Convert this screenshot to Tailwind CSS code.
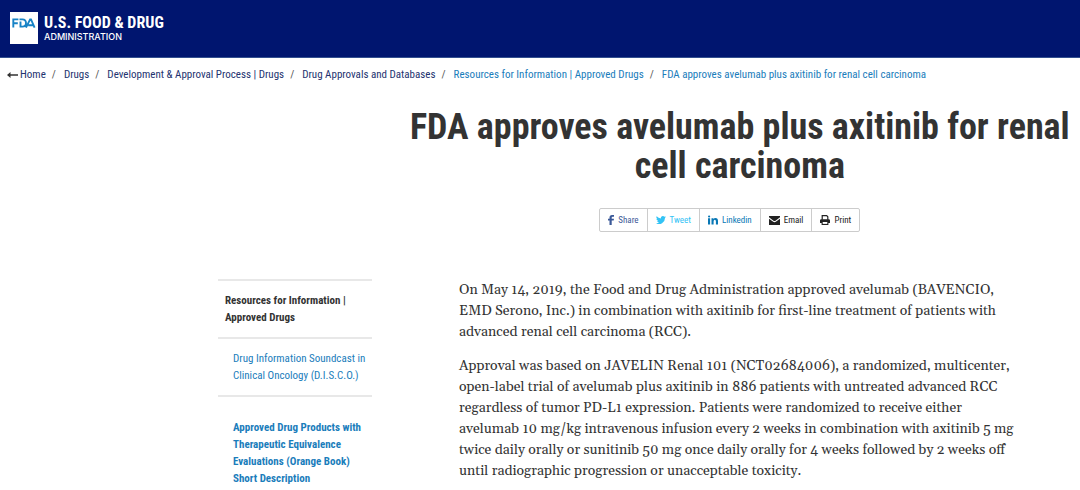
<!DOCTYPE html>
<html lang="en">
<head>
<meta charset="utf-8">
<meta name="viewport" content="width=device-width, initial-scale=1">
<title>FDA approves avelumab plus axitinib for renal cell carcinoma</title>
<script src="https://cdn.jsdelivr.net/npm/@tailwindcss/browser@4"></script>
</head>
<body class="bg-white text-[#333] font-['Roboto_Condensed','Liberation_Sans_Narrow',sans-serif]">
<header class="flex h-[58px] items-start gap-[6px] border-b border-[#33508f] bg-[#00156f] pt-3 pl-[10px] text-white">
  <svg class="h-8 w-7 shrink-0" viewBox="0 0 28 32" role="img" aria-label="FDA">
    <rect width="28" height="32" fill="#fff"/>
    <g fill="none" stroke="#1783c6" stroke-width="1.9">
      <path d="M3.3 15.6V7.4H8.4M3.3 11.3H7.8M10.5 9.6V14.6H12.4Q16 14.6 16 11T12.4 7.4H9.5M16 15.6 20.1 7.4H21L24.6 15.6M18.2 13.2H23.4"/>
    </g>
  </svg>
  <div>
    <p class="text-base leading-[21px] font-bold whitespace-nowrap">U.S. FOOD &amp; DRUG</p>
    <p class="font-['Inter',sans-serif] text-[9px] leading-[8px] font-medium whitespace-nowrap">ADMINISTRATION</p>
  </div>
</header>
<nav aria-label="Breadcrumb" class="pt-[8px] pl-[7px]">
  <ol class="flex flex-wrap gap-x-[6px] text-[11px] leading-[17px] text-[#23336f]">
    <li class="flex items-center gap-[2px]">
      <svg class="h-2 w-[11px]" viewBox="0 0 11 8" aria-hidden="true"><path d="M0 4 3.5 1V3.2H11V4.8H3.5V7Z" fill="#333"/></svg>
      <a href="#">Home</a></li>
    <li><span class="mr-[8px] text-[#555]">/</span><a href="#">Drugs</a></li>
    <li><span class="mr-[8px] text-[#555]">/</span><a href="#">Development &amp; Approval Process | Drugs</a></li>
    <li><span class="mr-[8px] text-[#555]">/</span><a href="#">Drug Approvals and Databases</a></li>
    <li><span class="mr-[8px] text-[#555]">/</span><a href="#" class="text-[#1a7dbb]">Resources for Information | Approved Drugs</a></li>
    <li><span class="mr-[8px] text-[#555]">/</span><a href="#" class="text-[#1a7dbb]">FDA approves avelumab plus axitinib for renal cell carcinoma</a></li>
  </ol>
</nav>
<main>
  <div class="ml-[37%] pt-[25px] text-center">
    <h1 class="text-4xl leading-[39px] font-bold">FDA approves avelumab plus axitinib for renal<br>cell carcinoma</h1>
    <div class="mt-[22px] mr-5 flex justify-center text-[9px] leading-[22px]">
      <div class="flex divide-x divide-[#ccc] rounded-xs border border-[#ccc]">
        <button class="flex items-center gap-1 px-2 text-[#3b5998]"><svg class="h-[10px] w-[6px]" viewBox="0 0 6 10" fill="currentColor" aria-hidden="true"><path d="M1.5 10V5.5H0V3.7H1.5V2.5Q1.5 0 4 0H6V1.7H4.7Q3.7 1.7 3.7 2.6V3.7H6L5.7 5.5H3.7V10Z"/></svg>Share</button>
        <button class="flex items-center gap-1 px-2 text-[#33c3f5]"><svg class="h-[10px] w-[10px]" viewBox="0 0 24 24" fill="currentColor" aria-hidden="true"><path d="M24 4.6a10 10 0 0 1-2.8.8 5 5 0 0 0 2.1-2.7 10 10 0 0 1-3.1 1.2 4.9 4.9 0 0 0-8.4 4.5A14 14 0 0 1 1.7 3.2a4.9 4.9 0 0 0 1.5 6.5 5 5 0 0 1-2.2-.6 4.9 4.9 0 0 0 4 4.9 5 5 0 0 1-2.3.1 4.9 4.9 0 0 0 4.6 3.4A10 10 0 0 1 0 19.5a14 14 0 0 0 21.5-12.4A10 10 0 0 0 24 4.6Z"/></svg>Tweet</button>
        <button class="flex items-center gap-1 px-2 text-[#0877b5]"><svg class="h-[10px] w-[10px]" viewBox="0 0 10 10" fill="currentColor" aria-hidden="true"><path d="M0 3.3H2.1V9.5H0ZM3.5 3.3H5.5V4.2Q6 3.1 7.5 3.1 10 3.1 10 6V9.5H7.9V6.4Q7.9 4.8 6.8 4.8 5.6 4.8 5.6 6.4V9.5H3.5Z"/><circle cx="1.1" cy="1.5" r="1.1"/></svg>Linkedin</button>
        <button class="flex items-center gap-1 px-2 text-[#222]"><svg class="h-[9px] w-[11px]" viewBox="0 0 11 9" fill="currentColor" aria-hidden="true"><path d="M0 0H11V1.3L6.5 4.7Q5.5 5.3 4.5 4.7L0 1.3ZM0 2.8 4.2 5.8Q5.5 6.6 6.8 5.8L11 2.8V9H0Z"/></svg>Email</button>
        <button class="flex items-center gap-1 px-2 text-[#222]"><svg class="h-[10px] w-[10px]" viewBox="0 0 10 10" aria-hidden="true"><path d="M2.2 4.8V.7H6.7L7.8 1.8V4.8" fill="none" stroke="currentColor" stroke-width="1.2"/><path d="M1.3 4.2H8.7Q10 4.2 10 5.5V8H8.4V10H1.6V8H0V5.5Q0 4.2 1.3 4.2Z" fill="currentColor"/><path d="M2.7 7H7.3V8.9H2.7Z" fill="#fff"/></svg>Print</button>
      </div>
    </div>
  </div>
  <div class="mt-[47px] flex pr-[5%] pl-[20%]">
    <aside class="mr-[87px] ml-[2px] w-[154px] shrink-0 text-[11px] leading-[17px] whitespace-nowrap">
      <h2 class="border-y-2 border-[#e8e8e8] px-[7px] py-[11px] font-bold">Resources for Information |<br>Approved Drugs</h2>
      <ul class="text-[#1a7dbb]">
        <li class="border-b-2 border-[#e8e8e8] py-[11px] pl-[15px]"><a href="#">Drug Information Soundcast in<br>Clinical Oncology (D.I.S.C.O.)</a></li>
        <li class="pt-[22px] pl-[15px] font-bold"><a href="#">Approved Drug Products with<br>Therapeutic Equivalence<br>Evaluations (Orange Book)<br>Short Description</a></li>
      </ul>
    </aside>
    <article class="min-w-0 flex-1 space-y-[13px] pt-px font-['Gelasio','Georgia','Liberation_Serif',serif] text-sm leading-[21px]">
      <p>On May 14, 2019, the Food and Drug Administration approved avelumab (BAVENCIO,<br>EMD Serono, Inc.) in combination with axitinib for first-line treatment of patients with<br>advanced renal cell carcinoma (RCC).</p>
      <p>Approval was based on JAVELIN Renal 101 (NCT02684006), a randomized, multicenter,<br>open-label trial of avelumab plus axitinib in 886 patients with untreated advanced RCC<br>regardless of tumor PD-L1 expression. Patients were randomized to receive either<br>avelumab 10 mg/kg intravenous infusion every 2 weeks in combination with axitinib 5 mg<br>twice daily orally or sunitinib 50 mg once daily orally for 4 weeks followed by 2 weeks off<br>until radiographic progression or unacceptable toxicity.</p>
    </article>
  </div>
</main>
</body>
</html>
